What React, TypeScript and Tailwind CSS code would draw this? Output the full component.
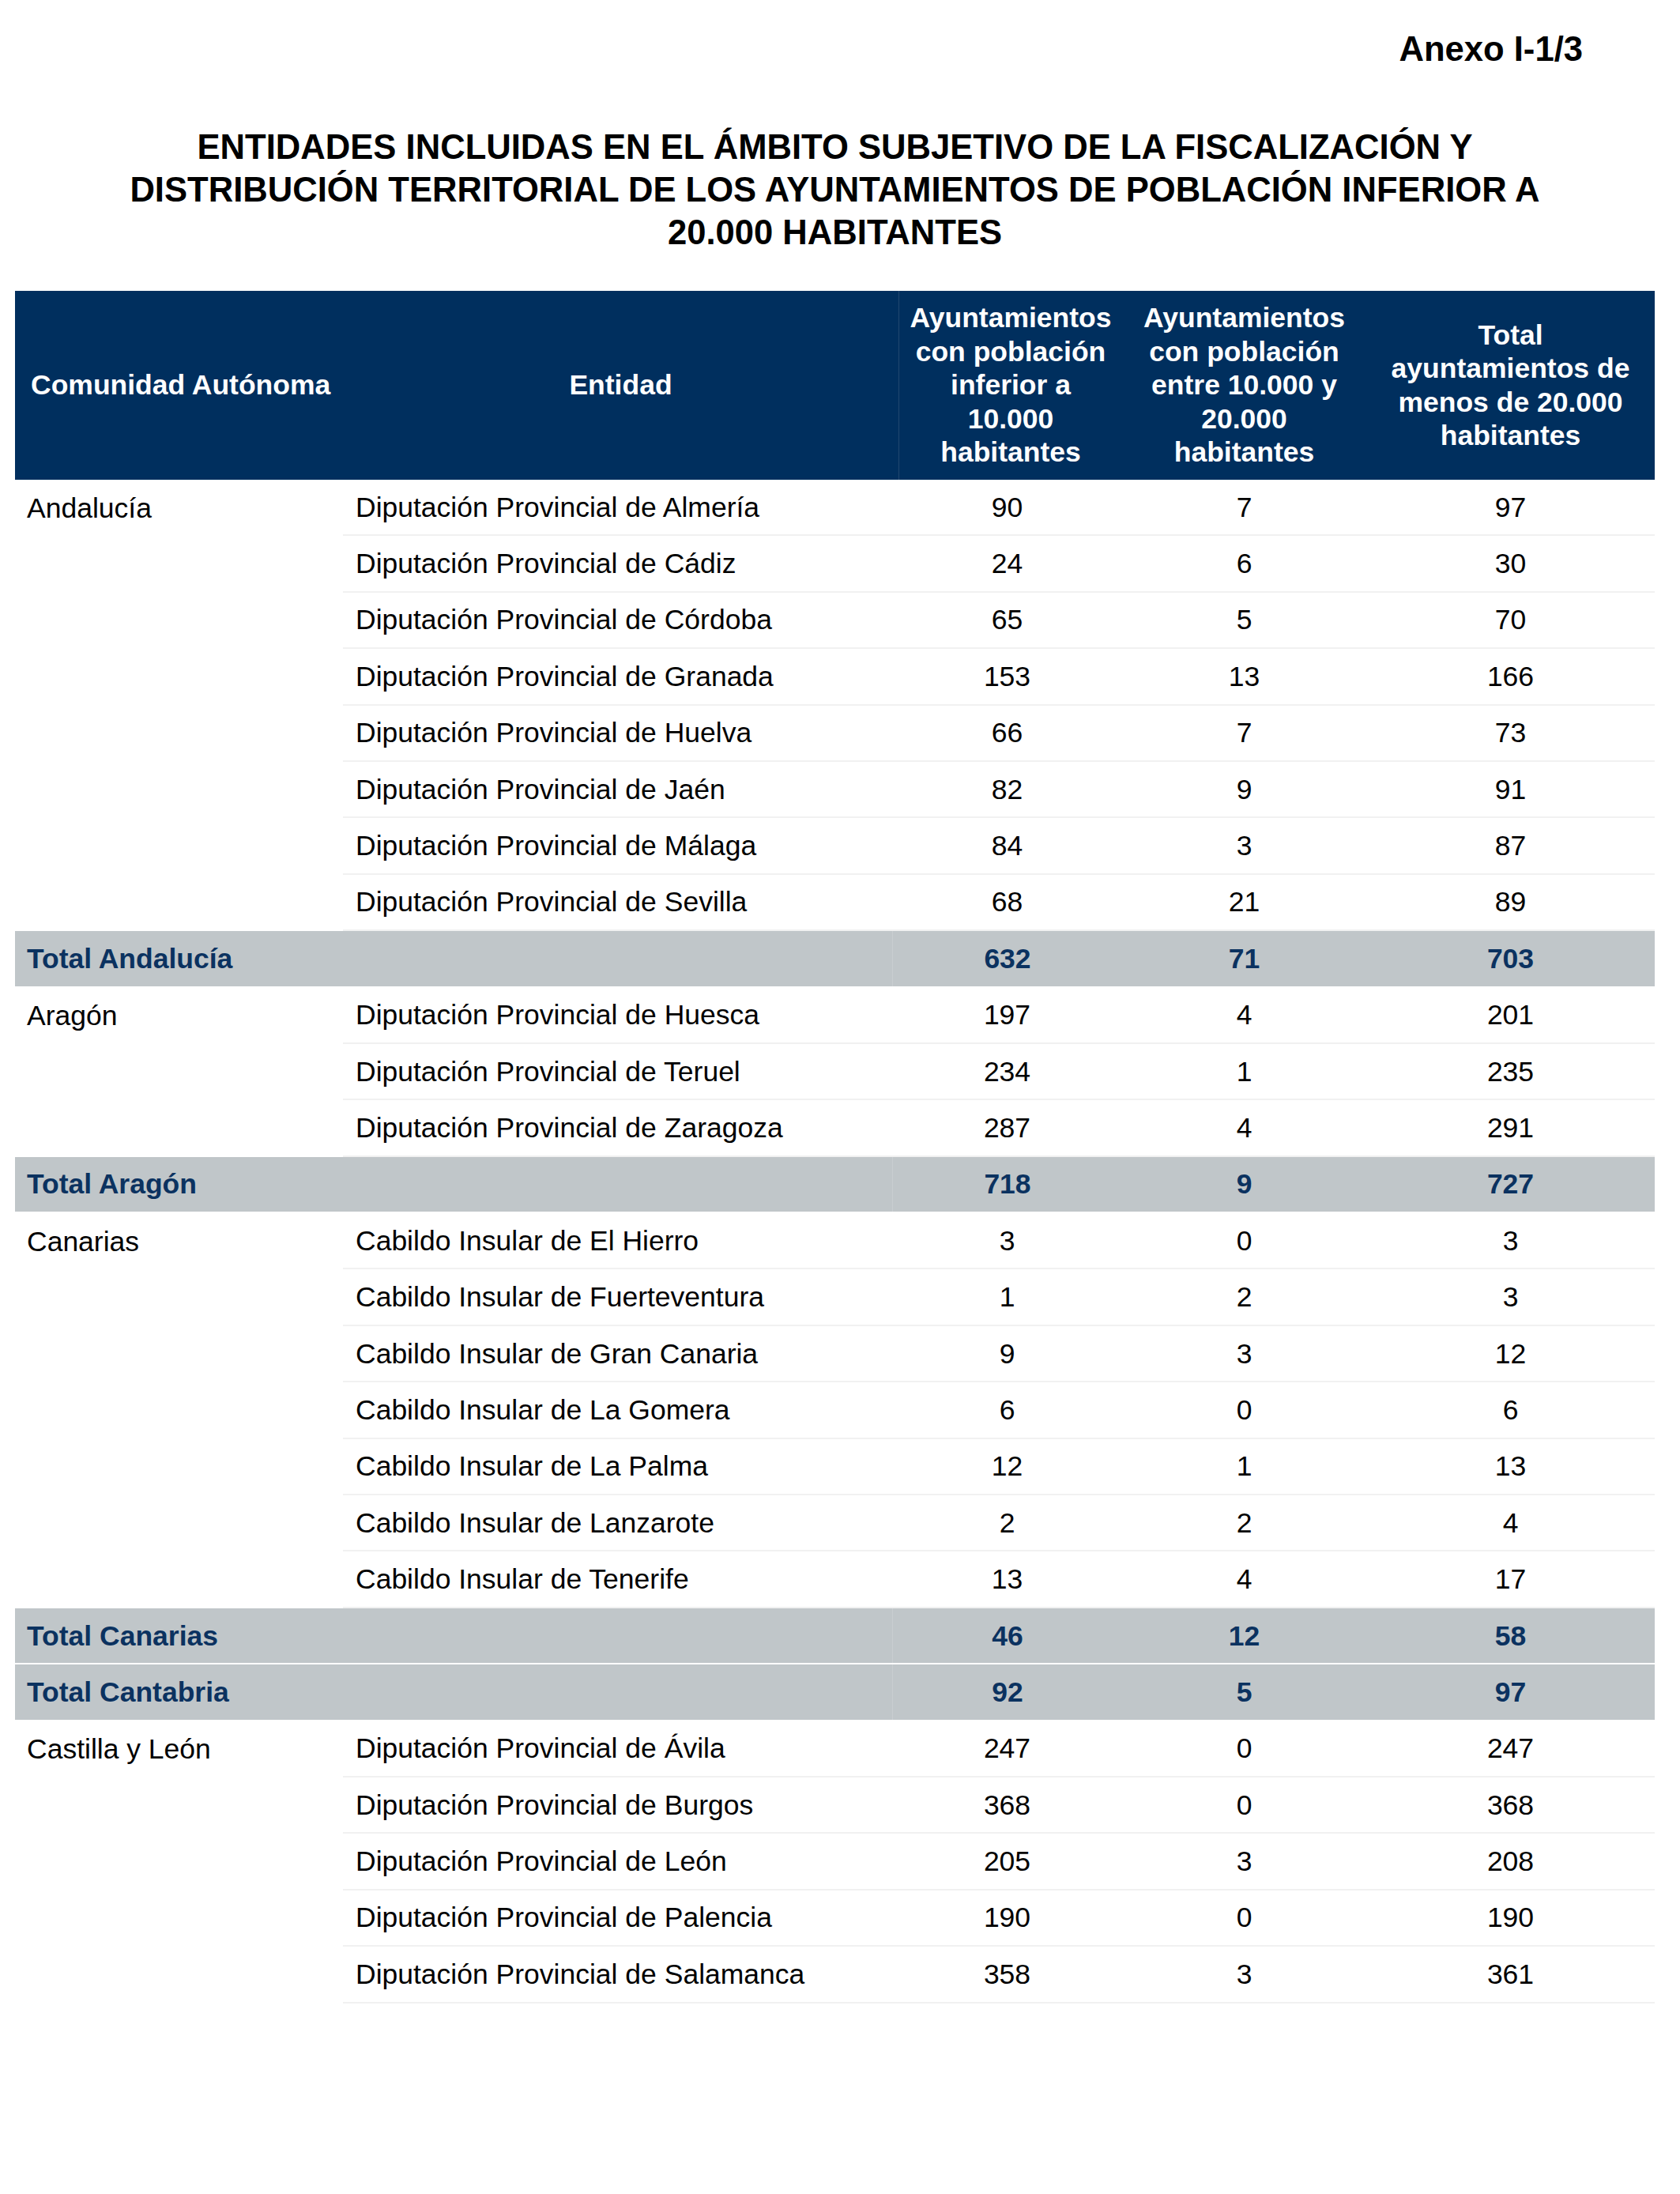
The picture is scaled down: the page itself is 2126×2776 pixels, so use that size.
type Row = [string, number, number, number];

interface Group {
  name?: string;
  rows: Row[];
  total?: [string, number, number, number];
}

const groups: Group[] = [
  {
    name: "Andalucía",
    rows: [
      ["Diputación Provincial de Almería", 90, 7, 97],
      ["Diputación Provincial de Cádiz", 24, 6, 30],
      ["Diputación Provincial de Córdoba", 65, 5, 70],
      ["Diputación Provincial de Granada", 153, 13, 166],
      ["Diputación Provincial de Huelva", 66, 7, 73],
      ["Diputación Provincial de Jaén", 82, 9, 91],
      ["Diputación Provincial de Málaga", 84, 3, 87],
      ["Diputación Provincial de Sevilla", 68, 21, 89],
    ],
    total: ["Total Andalucía", 632, 71, 703],
  },
  {
    name: "Aragón",
    rows: [
      ["Diputación Provincial de Huesca", 197, 4, 201],
      ["Diputación Provincial de Teruel", 234, 1, 235],
      ["Diputación Provincial de Zaragoza", 287, 4, 291],
    ],
    total: ["Total Aragón", 718, 9, 727],
  },
  {
    name: "Canarias",
    rows: [
      ["Cabildo Insular de El Hierro", 3, 0, 3],
      ["Cabildo Insular de Fuerteventura", 1, 2, 3],
      ["Cabildo Insular de Gran Canaria", 9, 3, 12],
      ["Cabildo Insular de La Gomera", 6, 0, 6],
      ["Cabildo Insular de La Palma", 12, 1, 13],
      ["Cabildo Insular de Lanzarote", 2, 2, 4],
      ["Cabildo Insular de Tenerife", 13, 4, 17],
    ],
    total: ["Total Canarias", 46, 12, 58],
  },
  {
    rows: [],
    total: ["Total Cantabria", 92, 5, 97],
  },
  {
    name: "Castilla y León",
    rows: [
      ["Diputación Provincial de Ávila", 247, 0, 247],
      ["Diputación Provincial de Burgos", 368, 0, 368],
      ["Diputación Provincial de León", 205, 3, 208],
      ["Diputación Provincial de Palencia", 190, 0, 190],
      ["Diputación Provincial de Salamanca", 358, 3, 361],
    ],
  },
];

const GroupBlock = ({ group }: { group: Group }) => (
  <div>
    {group.rows.length > 0 && (
      <div className="flex">
        <div className="w-[415px] shrink-0">
          <div className="flex h-[71.4px] items-center pl-[15px]">{group.name}</div>
        </div>
        <div className="flex-1">
          {group.rows.map((r) => (
            <div
              key={r[0]}
              className="grid h-[71.4px] grid-cols-[695px_291px_309px_365px] items-center border-b-2 border-[#f1f1f1]"
            >
              <div className="pl-[16px]">{r[0]}</div>
              <div className="text-center">{r[1]}</div>
              <div className="text-center">{r[2]}</div>
              <div className="text-center">{r[3]}</div>
            </div>
          ))}
        </div>
      </div>
    )}
    {group.total && (
      <div className="grid h-[71.4px] grid-cols-[1110px_291px_309px_365px] items-stretch border-b-2 border-white bg-[#c0c6c9] font-bold text-[#0b3260]">
        <div className="flex items-center pl-[15px]">{group.total[0]}</div>
        <div className="flex items-center justify-center border-l border-[#c9ced1]">{group.total[1]}</div>
        <div className="flex items-center justify-center">{group.total[2]}</div>
        <div className="flex items-center justify-center">{group.total[3]}</div>
      </div>
    )}
  </div>
);

export default function App() {
  return (
    <div className="min-h-[2776px] w-[2126px] bg-white font-['Liberation_Sans',Arial,sans-serif] text-black">
      <div className="ml-[19px] w-[2075px]">
        <div className="pt-[35px] pr-[91px] text-right text-[43.6px] font-bold leading-[54px]">Anexo I-1/3</div>

        <h1 className="mt-[70px] text-center text-[43.6px] font-bold leading-[54px]">
          ENTIDADES INCLUIDAS EN EL ÁMBITO SUBJETIVO DE LA FISCALIZACIÓN Y
          <br />
          DISTRIBUCIÓN TERRITORIAL DE LOS AYUNTAMIENTOS DE POBLACIÓN INFERIOR A
          <br />
          20.000 HABITANTES
        </h1>

        <div className="mt-[47px] text-[35.5px] leading-[40px]">
          {/* cabecera */}
          <div className="grid h-[239px] grid-cols-[415px_703px_283px_309px_365px] bg-[#002f5e] font-bold leading-[42.4px] text-white">
            <div className="flex items-center pl-[20px]">Comunidad Autónoma</div>
            <div className="flex items-center justify-center">Entidad</div>
            <div className="flex items-center justify-center border-l border-[#22476f] text-center">
              Ayuntamientos
              <br />
              con población
              <br />
              inferior a
              <br />
              10.000
              <br />
              habitantes
            </div>
            <div className="flex items-center justify-center text-center">
              Ayuntamientos
              <br />
              con población
              <br />
              entre 10.000 y
              <br />
              20.000
              <br />
              habitantes
            </div>
            <div className="flex items-center justify-center text-center">
              Total
              <br />
              ayuntamientos de
              <br />
              menos de 20.000
              <br />
              habitantes
            </div>
          </div>

          {groups.map((g, i) => (
            <GroupBlock key={i} group={g} />
          ))}
        </div>
      </div>
    </div>
  );
}
